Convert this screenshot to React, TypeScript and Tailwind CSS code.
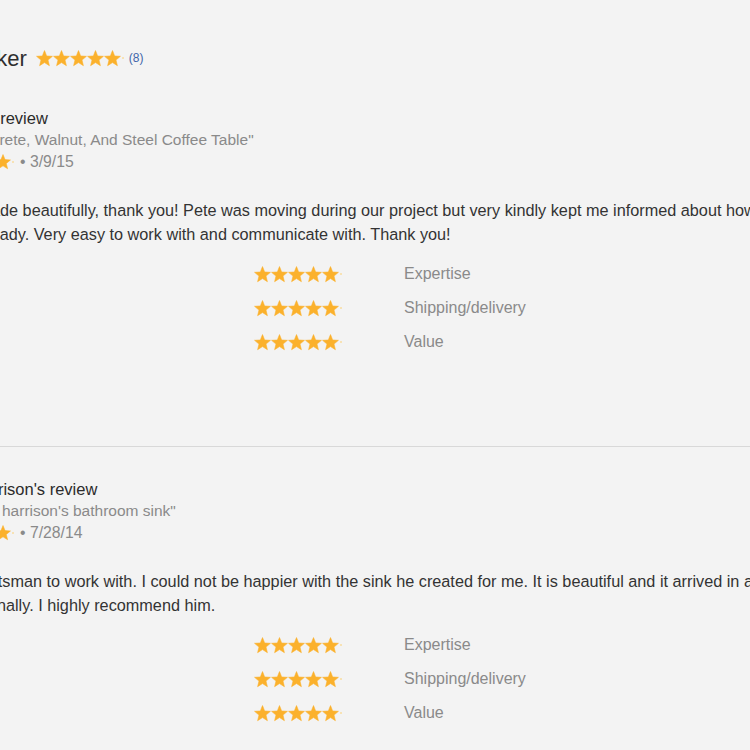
import React from "react";

const STAR =
  "M12 0.8L15.06 8.39L23.22 8.95L16.95 14.21L18.94 22.15L12 17.8L5.06 22.15L7.05 14.21L0.78 8.95L8.94 8.39Z";

function Stars({ size }: { size: string }) {
  return (
    <div className="flex items-center">
      {[0, 1, 2, 3, 4].map((i) => (
        <svg key={i} viewBox="0 0 24 24" className={size}>
          <path d={STAR} fill="#fbb12c" stroke="#fbb12c" strokeWidth="0.8" strokeLinejoin="round" />
        </svg>
      ))}
      <span className="ml-[1px] h-[2px] w-[2px] rounded-full bg-[#f8dca0]" />
    </div>
  );
}

type Review = {
  title: string;
  product: string;
  date: string;
  lines: string[];
};

const reviews: Review[] = [
  {
    title: "Sandra's review",
    product: "\"Big Concrete, Walnut, And Steel Coffee Table\"",
    date: "3/9/15",
    lines: [
      "It's so made beautifully, thank you! Pete was moving during our project but very kindly kept me informed about how it went and when it",
      "was all ready. Very easy to work with and communicate with. Thank you!",
    ],
  },
  {
    title: "Joan Harrison's review",
    product: "\"For Joan harrison's bathroom sink\"",
    date: "7/28/14",
    lines: [
      "Ideal craftsman to work with. I could not be happier with the sink he created for me. It is beautiful and it arrived in a timely manner",
      "professionally. I highly recommend him.",
    ],
  },
];

const ratings = ["Expertise", "Shipping/delivery", "Value"];

function ReviewBlock({ r, first }: { r: Review; first: boolean }) {
  return (
    <div className={first ? "pt-[34px] pb-[87px]" : "pt-[31px]"}>
      <div className="text-[16.5px] leading-[22px] text-[#2b2b2b]">{r.title}</div>
      <div className="text-[15.5px] leading-[22px] text-[#8a8a8a]">{r.product}</div>
      <div className="flex items-center gap-[6px] text-[15.75px] leading-[22px] text-[#8a8a8a]">
        <Stars size="w-[16px] h-[16px]" />
        <span>• {r.date}</span>
      </div>
      <div className="mt-[25px] whitespace-nowrap text-[16.25px] leading-[24px] text-[#333]">
        {r.lines.map((l) => (
          <div key={l}>{l}</div>
        ))}
      </div>
      <div className="ml-[323px] mt-[11px] flex flex-col">
        {ratings.map((label) => (
          <div key={label} className="flex h-[34px] items-center">
            <div className="w-[150px]">
              <Stars size="w-[17px] h-[17px]" />
            </div>
            <span className="text-[16px] text-[#8a8a8a]">{label}</span>
          </div>
        ))}
      </div>
    </div>
  );
}

export default function App() {
  return (
    <div
      className="h-[750px] w-[750px] overflow-hidden bg-[#f3f3f3]"
      style={{ fontFamily: '"Liberation Sans", Arial, sans-serif' }}
    >
      <div className="-ml-[69px] pt-[43px]">
        <div className="flex h-[30px] items-center">
          <span className="text-[22px] text-[#2e2e2e]">D. Walker</span>
          <div className="ml-[9px]">
            <Stars size="w-[17px] h-[17px]" />
          </div>
          <span className="ml-[5px] text-[12px] text-[#3f66aa]">(8)</span>
        </div>
        <ReviewBlock r={reviews[0]} first />
        <div className="h-px w-[900px] bg-[#d8d8d8]" />
        <ReviewBlock r={reviews[1]} first={false} />
      </div>
    </div>
  );
}
